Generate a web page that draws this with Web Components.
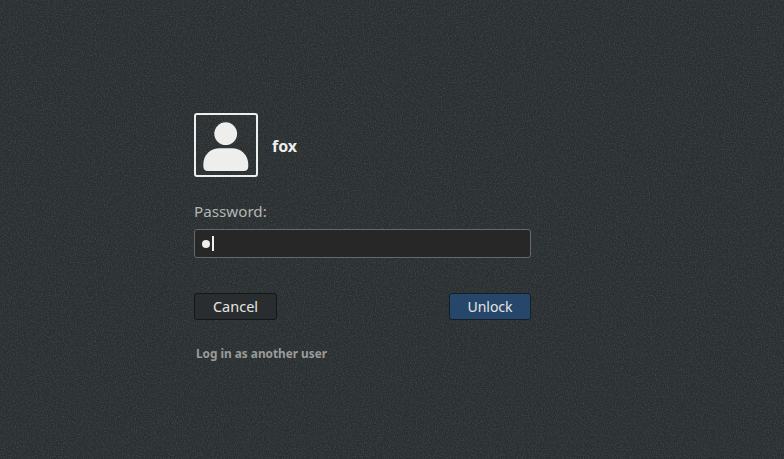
<!DOCTYPE html>
<html>
<head>
<meta charset="utf-8">
<title>Unlock</title>
<style>
  html, body { margin: 0; height: 100%; background: #2a2f31; }
  body { font-family: "Noto Sans", "Open Sans", sans-serif; color: #eeeeec; overflow: hidden; }
</style>
</head>
<body>
<unlock-dialog user="fox"></unlock-dialog>

<script>
customElements.define('user-avatar', class extends HTMLElement {
  constructor() {
    super()
    this.attachShadow({ mode: 'open' }).innerHTML = `
    <style>
      :host { display: block; width: 64px; height: 64px; box-sizing: border-box; border: 2px solid #eeeeec; border-radius: 3px; }
      svg { display: block; }
    </style>
    <svg width="60" height="60" viewBox="0 0 60 60">
      <circle cx="29.700" cy="18.700" r="11.400" fill="#eeeeec"/>
      <path d="M7.300 51c0-3 .2-5.500 1.200-8C11 37 17 33.300 23 33.300h13.500c6 0 12 3.700 14.500 9.700 1 2.500 1.300 5 1.300 8 0 3.500-1.500 5-4.500 5H11.800c-3 0-4.500-1.500-4.500-5z" fill="#eeeeec"/>
    </svg>`
  }
})

customElements.define('user-row', class extends HTMLElement {
  constructor() {
    super()
    this.attachShadow({ mode: 'open' }).innerHTML = `
    <style>
      :host { display: flex; align-items: center; gap: 14px; }
      span { padding-top: 2px; font-size: 16px; font-weight: 700; color: #eeeeec; }
    </style>
    <user-avatar></user-avatar>
    <span><slot></slot></span>`
  }
})

customElements.define('password-entry', class extends HTMLElement {
  constructor() {
    super()
    this.attachShadow({ mode: 'open' }).innerHTML = `
    <style>
      :host { display: flex; align-items: center; box-sizing: border-box; height: 29px; padding-left: 7px; background: #272727; border: 1px solid #65696a; border-radius: 3px; }
      .dot { width: 8px; height: 8px; border-radius: 50%; background: #eeeeec; }
      .caret { width: 2px; height: 15px; margin-left: 2px; background: #eeeeec; }
    </style>
    <div class="dot"></div><div class="caret"></div>`
  }
})

customElements.define('dialog-button', class extends HTMLElement {
  constructor() {
    super()
    this.attachShadow({ mode: 'open' }).innerHTML = `
    <style>
      :host { display: flex; align-items: center; justify-content: center; box-sizing: border-box; height: 27px; padding-bottom: 2px; font-size: 14.500px; color: #e4e5e3; background: #2a2d2f; border: 1px solid #14171a; border-radius: 3px; }
      :host([primary]) { padding-bottom: 0; font-size: 14px; background: #27476a; border-color: #12202c; }
    </style>
    <slot></slot>`
  }
})

customElements.define('unlock-dialog', class extends HTMLElement {
  constructor() {
    super()
    const user = this.getAttribute('user')
    this.attachShadow({ mode: 'open' }).innerHTML = `
    <style>
      :host { display: block; position: relative; width: 784px; height: 459px; background: #2a2f31; overflow: hidden; }
      .noise { position: absolute; left: 0; top: 0; pointer-events: none; }
      .box { position: relative; display: flex; flex-direction: column; width: 337px; margin-left: 194px; padding-top: 113px; }
      .label { margin-top: 24px; font-size: 15.200px; line-height: 20px; color: #b4b6b3; }
      password-entry { margin-top: 8px; }
      .actions { display: flex; justify-content: space-between; margin-top: 35px; }
      .cancel { width: 83px; }
      .unlock { width: 82px; }
      .other { margin: 24px 0 0 2px; font-size: 11.800px; line-height: 18px; font-weight: 700; color: #9a9c99; }
    </style>
    <svg class="noise" width="784" height="459">
      <filter id="n" x="0" y="0" width="100%" height="100%">
        <feTurbulence type="fractalNoise" baseFrequency="0.85" numOctaves="2" seed="4"/>
        <feColorMatrix values="0 0 0 0 0.5  0 0 0 0 0.58  0 0 0 0 0.6  2 0 0 0 -0.800"/>
      </filter>
      <rect width="784" height="459" filter="url(#n)" opacity="0.16"/>
    </svg>
    <div class="box">
      <user-row>${user}</user-row>
      <div class="label">Password:</div>
      <password-entry></password-entry>
      <div class="actions">
        <dialog-button class="cancel">Cancel</dialog-button>
        <dialog-button class="unlock" primary>Unlock</dialog-button>
      </div>
      <div class="other">Log in as another user</div>
    </div>`
  }
})
</script>
</body>
</html>
